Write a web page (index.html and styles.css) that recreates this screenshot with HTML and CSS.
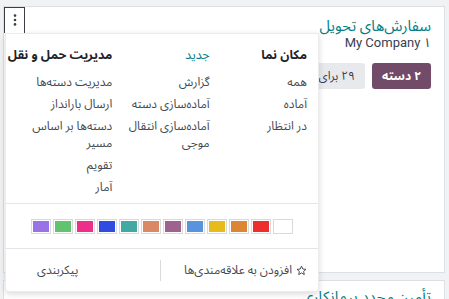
FILE: index.html
```html
<!DOCTYPE html>
<html lang="fa" dir="rtl">
<head>
<meta charset="utf-8">
<link rel="stylesheet" href="styles.css">
</head>
<body>
<div class="page">
  <div class="card card-main">
    <div class="card-body">
      <div class="card-title">سفارش‌های تحویل</div>
      <div class="card-sub">My Company ۱</div>
      <div class="card-actions">
        <span class="btn btn-primary">۲ دسته</span>
        <span class="btn btn-light">۲۹ برای تحویل</span>
      </div>
    </div>
    <div class="kebab">
      <svg width="4" height="12" viewBox="0 0 4 12"><circle cx="2" cy="1.6" r="1.3" fill="#3b3f45"/><circle cx="2" cy="6" r="1.3" fill="#3b3f45"/><circle cx="2" cy="10.4" r="1.3" fill="#3b3f45"/></svg>
    </div>
    <div class="menu">
      <div class="menu-cols">
        <div class="menu-col">
          <div class="menu-head">مکان نما</div>
          <div class="menu-item">همه</div>
          <div class="menu-item">آماده</div>
          <div class="menu-item">در انتظار</div>
        </div>
        <div class="menu-col">
          <div class="menu-head link">جدید</div>
          <div class="menu-item">گزارش</div>
          <div class="menu-item">آماده‌سازی دسته</div>
          <div class="menu-item">آماده‌سازی انتقال موجی</div>
        </div>
        <div class="menu-col">
          <div class="menu-head">مدیریت حمل و نقل</div>
          <div class="menu-item">مدیریت دسته‌ها</div>
          <div class="menu-item">ارسال بارانداز</div>
          <div class="menu-item">دسته‌ها بر اساس مسیر</div>
          <div class="menu-item">تقویم</div>
          <div class="menu-item">آمار</div>
        </div>
      </div>
      <div class="menu-colors">
        <span class="swatch c0"></span>
        <span class="swatch c1"></span>
        <span class="swatch c2"></span>
        <span class="swatch c3"></span>
        <span class="swatch c4"></span>
        <span class="swatch c5"></span>
        <span class="swatch c6"></span>
        <span class="swatch c7"></span>
        <span class="swatch c8"></span>
        <span class="swatch c9"></span>
        <span class="swatch c10"></span>
        <span class="swatch c11"></span>
      </div>
      <div class="menu-foot">
        <div class="foot-fav">
          <svg class="star" width="11" height="11" viewBox="0 0 24 24"><path d="M12 2.5l2.9 6.3 6.9.7-5.2 4.6 1.5 6.8L12 17.4l-6.1 3.5 1.5-6.8L2.2 9.5l6.9-.7z" fill="none" stroke="#3b3f45" stroke-width="2" stroke-linejoin="round"/></svg>
          <span>افزودن به علاقه‌مندی‌ها</span>
        </div>
        <div class="foot-conf">پیکربندی</div>
      </div>
    </div>
  </div>
  <div class="card card-next">
    <div class="card-body">
      <div class="card-title">تأمین مجدد پیمانکاری</div>
    </div>
  </div>
</div>
</body>
</html>
```
FILE: styles.css
```css
html, body {
  margin: 0;
  padding: 0;
}
body {
  background: #f1f2f4;
  font-family: Roboto, "Noto Sans Arabic", "Noto Sans", "DejaVu Sans", sans-serif;
  color: #374151;
  width: 449px;
  height: 299px;
  overflow: hidden;
}
.page {
  display: flex;
  flex-direction: column;
  gap: 7px;
  padding: 6px 4px 0 3px;
}
.card {
  background: #fff;
  border: 1px solid #dcdfe4;
  position: relative;
}
.card-main {
  height: 265px;
}
.card-next {
  height: 40px;
}
.card-body {
  padding: 9px 13px 0 12px;
}
.card-title {
  color: #017e84;
  font-size: 15px;
  line-height: 20px;
}
.card-next .card-body {
  padding-top: 6px;
}
.card-sub {
  font-size: 13px;
  line-height: 13px;
  color: #374151;
}
.card-actions {
  display: flex;
  gap: 7px;
  margin-top: 14px;
}
.btn {
  display: inline-flex;
  align-items: center;
  height: 26px;
  padding: 0 10px;
  border-radius: 3px;
  font-size: 12px;
}
.btn-primary {
  background: #714b67;
  color: #fff;
  font-weight: 700;
}
.btn-light {
  background: #e7e9ed;
  color: #374151;
}
.kebab {
  position: absolute;
  top: 0;
  left: 0;
  width: 21px;
  height: 26px;
  border: 1px solid #3b3f45;
  border-bottom: none;
  background: #fff;
  display: flex;
  justify-content: center;
  padding-top: 6px;
  box-sizing: border-box;
  z-index: 3;
}
.menu {
  position: absolute;
  top: 26px;
  left: 1px;
  width: 314px;
  height: 259px;
  background: #fff;
  border: 1px solid rgba(0, 0, 0, 0.08);
  box-sizing: border-box;
  box-shadow: 0 2px 6px rgba(0, 0, 0, 0.15);
  border-radius: 0 0 4px 4px;
  z-index: 2;
  display: flex;
  flex-direction: column;
}
.menu-cols {
  display: grid;
  grid-template-columns: repeat(3, 1fr);
  padding: 11px 11px 7px 9px;
  height: 169px;
  box-sizing: border-box;
}
.menu-col {
  display: flex;
  flex-direction: column;
  min-width: 0;
}
.menu-head {
  font-size: 12.5px;
  font-weight: 700;
  line-height: 20px;
  color: #1f2328;
  margin-bottom: 9px;
  white-space: nowrap;
}
.menu-head.link {
  color: #017e84;
  font-weight: 400;
}
.menu-item {
  font-size: 12px;
  line-height: 17px;
  color: #464a50;
  margin-bottom: 5px;
  padding-left: 12px;
}
.menu-colors {
  border-top: 1px solid #e3e5e8;
  border-bottom: 1px solid #e3e5e8;
  display: flex;
  justify-content: center;
  gap: 2px;
  padding: 15px 0 14px;
}
.swatch {
  width: 20px;
  height: 15px;
  box-sizing: border-box;
  border: 1px solid #d8dadd;
  padding: 1px;
  background-clip: content-box;
}
.c0 { background-color: #fff; }
.c1 { background-color: #ee2d2d; }
.c2 { background-color: #dc8534; }
.c3 { background-color: #e8bb1d; }
.c4 { background-color: #5794dd; }
.c5 { background-color: #9f628f; }
.c6 { background-color: #db8865; }
.c7 { background-color: #41a9a2; }
.c8 { background-color: #304be0; }
.c9 { background-color: #ee2f8a; }
.c10 { background-color: #61c36e; }
.c11 { background-color: #9872e6; }
.menu-foot {
  flex: 1;
  display: flex;
  align-items: center;
  font-size: 12px;
  color: #464a50;
}
.foot-fav {
  width: 157px;
  box-sizing: border-box;
  padding-right: 11px;
  display: flex;
  align-items: center;
  gap: 4px;
}
.foot-conf {
  flex: 1;
  border-right: 1px solid #d8dadd;
  height: 21px;
  line-height: 21px;
  text-align: left;
  padding-left: 31px;
}
```
